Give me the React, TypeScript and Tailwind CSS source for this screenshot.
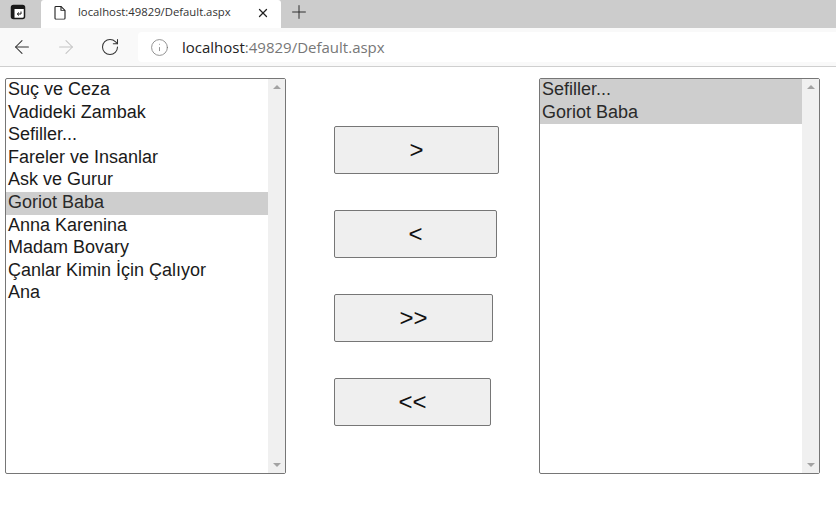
import { ArrowLeft, ArrowRight, Info, Plus, RotateCw, X } from 'lucide-react';

const leftBooks = [
  'Suç ve Ceza',
  'Vadideki Zambak',
  'Sefiller...',
  'Fareler ve Insanlar',
  'Ask ve Gurur',
  'Goriot Baba',
  'Anna Karenina',
  'Madam Bovary',
  'Çanlar Kimin İçin Çalıyor',
  'Ana',
];

const rightBooks = ['Sefiller...', 'Goriot Baba'];

function ListBox({ items, selected }: { items: string[]; selected: string[] }) {
  return (
    <div className="flex h-[396px] w-[281px] shrink-0 rounded-[2px] border border-[#767676] bg-white">
      <ul className="min-w-0 flex-1">
        {items.map((item) => (
          <li
            key={item}
            className={`h-[22.6px] pl-[2px] text-[18px] leading-[20px] ${
              selected.includes(item) ? 'bg-[#cecece] text-[#2a2a2a]' : 'text-[#1a1a1a]'
            }`}
          >
            {item}
          </li>
        ))}
      </ul>
      <div className="flex w-[17px] shrink-0 flex-col items-center justify-between bg-[#f0f0f0] py-[6px]">
        <span className="h-0 w-0 border-x-[4px] border-b-[4px] border-x-transparent border-b-[#a3a3a3]" />
        <span className="h-0 w-0 border-x-[4px] border-t-[4px] border-x-transparent border-t-[#a3a3a3]" />
      </div>
    </div>
  );
}

function MoveButton({ label, width }: { label: string; width: string }) {
  return (
    <button
      type="button"
      className={`h-[48px] rounded-[2px] border border-[#767676] bg-[#efefef] text-[24px] leading-none text-[#111] ${width}`}
    >
      {label}
    </button>
  );
}

export default function App() {
  return (
    <div className="h-[531px] w-[836px] overflow-hidden bg-white font-['Liberation_Sans',Arial,sans-serif]">
      <div className="flex h-[28px] bg-[#cccccc]">
        <div className="flex w-[41px] items-center justify-center pb-[4px]">
          <svg width="16" height="16" viewBox="0 0 16 16" className="ml-[-5px]">
            <rect x="1.5" y="1.5" width="13" height="13" rx="2" fill="#fff" stroke="#1a1a1a" strokeWidth="1.5" />
            <path d="M1.5 3.5a2 2 0 0 1 2-2h9a2 2 0 0 1 2 2v1.5h-13z" fill="#1a1a1a" />
            <path d="M1.5 5h3v9.5h-1a2 2 0 0 1-2-2z" fill="#1a1a1a" />
            <path d="M11 7.5v2.5H7.5M9 8.5 7.2 10 9 11.5" fill="none" stroke="#1a1a1a" strokeWidth="1" />
          </svg>
        </div>
        <div className="flex w-[240px] items-center rounded-t-[3px] bg-white pb-[3px] pl-[13px] pr-[11px]">
          <svg width="12" height="14" viewBox="0 0 12 16" fill="none" stroke="#222" strokeWidth="1.1" preserveAspectRatio="none">
            <path d="M1 1.5a1 1 0 0 1 1-1h5l4 4.5v9a1 1 0 0 1-1 1H2a1 1 0 0 1-1-1z" />
            <path d="M7 .5V5h4" />
          </svg>
          <span className="ml-[12px] flex-1 font-['Open_Sans',sans-serif] text-[11.3px] text-[#333]">
            localhost:49829/Default.aspx
          </span>
          <X size={14} strokeWidth={2.25} className="text-[#222]" />
        </div>
        <div className="flex w-[36px] items-center justify-center pb-[4px]">
          <Plus size={22} strokeWidth={1} className="text-[#222]" />
        </div>
      </div>

      <div className="flex h-[39px] items-center border-b border-[#cfcfcf] bg-[#f9f9f9]">
        <div className="flex w-[138px] shrink-0 items-center text-[#333]">
          <ArrowLeft size={22} strokeWidth={1.15} className="ml-[11px]" />
          <ArrowRight size={22} strokeWidth={1.15} className="ml-[22px] text-[#c4c4c4]" />
          <RotateCw size={20} strokeWidth={1.25} className="ml-[23px]" />
        </div>
        <div className="flex h-[30px] flex-1 items-center rounded-l-[4px] bg-white pl-[12px] font-['Open_Sans',sans-serif] text-[15px]">
          <Info size={19} strokeWidth={1} className="text-[#777]" />
          <span className="ml-[13px] text-[#222]">localhost</span>
          <span className="text-[#777]">:49829/Default.aspx</span>
        </div>
      </div>

      <div className="flex pl-[5px] pt-[11px]">
        <ListBox items={leftBooks} selected={['Goriot Baba']} />
        <div className="flex w-[253px] shrink-0 flex-col items-start gap-[36px] pl-[48px] pt-[48px]">
          <MoveButton label=">" width="w-[165px]" />
          <MoveButton label="<" width="w-[163px]" />
          <MoveButton label=">>" width="w-[159px]" />
          <MoveButton label="<<" width="w-[157px]" />
        </div>
        <ListBox items={rightBooks} selected={rightBooks} />
      </div>
    </div>
  );
}
